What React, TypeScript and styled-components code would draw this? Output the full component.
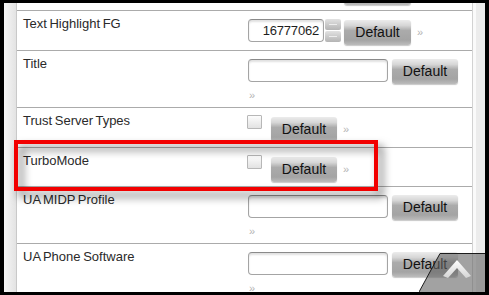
import React from "react";
import styled, { createGlobalStyle } from "styled-components";

const Global = createGlobalStyle`
  html, body { margin: 0; padding: 0; background: #000; }
  * { box-sizing: border-box; }
`;

const Frame = styled.div`
  width: 489px;
  height: 295px;
  background: #000;
  padding: 3px 4px 3px 4px;
  font-family: "Liberation Sans", Arial, sans-serif;
`;

const Screen = styled.div`
  position: relative;
  display: flex;
  width: 100%;
  height: 100%;
  overflow: hidden;
  background: #fff;
`;

const LeftGutter = styled.div`
  width: 13px;
  flex: none;
  background: linear-gradient(to right, #f7f7f7, #e3e3e3);
  border-right: 1px solid #c9c9c9;
`;

const RightGutter = styled.div`
  width: 13px;
  flex: none;
  background: linear-gradient(to right, #fafafa 0 3px, #ececec 3px);
  border-left: 1px solid #d2d2d2;
`;

const Content = styled.div`
  flex: 1;
  min-width: 0;
  overflow: hidden;
  background: #fff;
`;

const List = styled.div`
  margin-top: -32px;
  display: flex;
  flex-direction: column;
`;

const Row = styled.div<{ $pb: number }>`
  display: grid;
  grid-template-columns: 224px 1fr;
  padding: 8px 10px ${(p) => p.$pb}px 6px;
  border-bottom: 1px solid #ababab;
`;

const Label = styled.div`
  margin-top: -3px;
  font-size: 13px;
  line-height: 16px;
  color: #2a2a2a;
  word-spacing: -1px;
`;

const Controls = styled.div`
  display: flex;
  flex-wrap: wrap;
  align-items: flex-start;
  column-gap: 4px;
  row-gap: 4px;
`;

const TextInput = styled.div<{ $w: number }>`
  width: ${(p) => p.$w}px;
  height: 23px;
  margin-left: 1px;
  background: #fff;
  border: 1px solid #a4a4a4;
  border-top-color: #8a8a8a;
  border-radius: 4px;
  box-shadow: inset 0 2px 2px rgba(0, 0, 0, 0.12);
  font-size: 13px;
  line-height: 21px;
  color: #1e1e1e;
  text-align: right;
  padding-right: 4px;
  letter-spacing: -0.2px;
`;

const Spinner = styled.div`
  display: flex;
  flex-direction: column;
  gap: 1px;
  margin-left: -3px;
`;

const SpinPart = styled.div`
  width: 16px;
  height: 11px;
  border-radius: 2px;
  background: linear-gradient(#e2e2e2, #b4b4b4);
  display: flex;
  align-items: center;
  justify-content: center;
  &::after {
    content: "";
    width: 8px;
    height: 1px;
    background: #ededed;
  }
`;

const Button = styled.div<{ $shift?: number; $w?: number; $left?: number }>`
  width: ${(p) => p.$w ?? 66}px;
  height: 25px;
  margin-top: ${(p) => p.$shift ?? 0}px;
  margin-left: ${(p) => p.$left ?? 0}px;
  border-radius: 3px;
  background: linear-gradient(
    #ececec 0%,
    #d6d6d6 22%,
    #ababab 42%,
    #a4a4a4 80%,
    #bcbcbc 100%
  );
  box-shadow: 0 1px 1px rgba(0, 0, 0, 0.22);
  font-size: 14px;
  line-height: 25px;
  text-align: center;
  color: #111;
`;

const Check = styled.div`
  width: 15px;
  height: 14px;
  margin-top: -1px;
  border: 1px solid #b7b7b7;
  background: linear-gradient(#fcfcfc, #e2e2e2);
  border-radius: 1px;
`;

const More = styled.span`
  align-self: center;
  font-size: 11px;
  line-height: 14px;
  color: #b3b3b3;
  margin-left: 2px;
`;

const Highlight = styled.div`
  position: absolute;
  left: 10px;
  top: 137px;
  width: 364px;
  height: 51px;
  border: 4px solid #f20000;
  filter: drop-shadow(5px 6px 4px rgba(0, 0, 0, 0.55));
  pointer-events: none;
`;

const ScrollTop = styled.svg`
  position: absolute;
  right: 0;
  bottom: 0;
  width: 66px;
  height: 39px;
`;

type Kind = "number" | "text" | "check";

const rows: { label: string; kind: Kind; value?: string }[] = [
  { label: "Text Highlight BG", kind: "number", value: "16777215" },
  { label: "Text Highlight FG", kind: "number", value: "16777062" },
  { label: "Title", kind: "text" },
  { label: "Trust Server Types", kind: "check" },
  { label: "TurboMode", kind: "check" },
  { label: "UA MIDP Profile", kind: "text" },
  { label: "UA Phone Software", kind: "text" },
];

function Setting({ label, kind, value }: { label: string; kind: Kind; value?: string }) {
  return (
    <Row $pb={kind === "check" ? 4.5 : 5}>
      <Label>{label}</Label>
      <Controls>
        {kind === "number" && (
          <>
            <TextInput $w={76}>{value}</TextInput>
            <Spinner>
              <SpinPart />
              <SpinPart />
            </Spinner>
            <Button $shift={1} $w={67} $left={-1}>
              Default
            </Button>
          </>
        )}
        {kind === "text" && (
          <>
            <TextInput $w={140} />
            <Button>Default</Button>
          </>
        )}
        {kind === "check" && (
          <>
            <Check />
            <Button $shift={1} $left={5}>
              Default
            </Button>
          </>
        )}
        <More>»</More>
      </Controls>
    </Row>
  );
}

export default function App() {
  return (
    <>
      <Global />
      <Frame>
        <Screen>
          <LeftGutter />
          <Content>
            <List>
              {rows.map((r) => (
                <Setting key={r.label} {...r} />
              ))}
            </List>
          </Content>
          <RightGutter />
          <Highlight />
          <ScrollTop viewBox="0 0 66 39">
            <defs>
              <linearGradient id="chev" x1="0" y1="0" x2="0" y2="1">
                <stop offset="0" stopColor="#ffffff" />
                <stop offset="1" stopColor="#d4d4d4" />
              </linearGradient>
            </defs>
            <polygon points="21,0.5 66,0.5 66,39 0,39" fill="rgba(100,100,100,0.6)" />
            <polyline points="0,39 21,0.5 66,0.5" fill="none" stroke="#1c1c1c" strokeWidth="1" />
            <polygon points="38,7 52,23 47,25 38,15 29,25 24,23" fill="url(#chev)" />
          </ScrollTop>
        </Screen>
      </Frame>
    </>
  );
}
